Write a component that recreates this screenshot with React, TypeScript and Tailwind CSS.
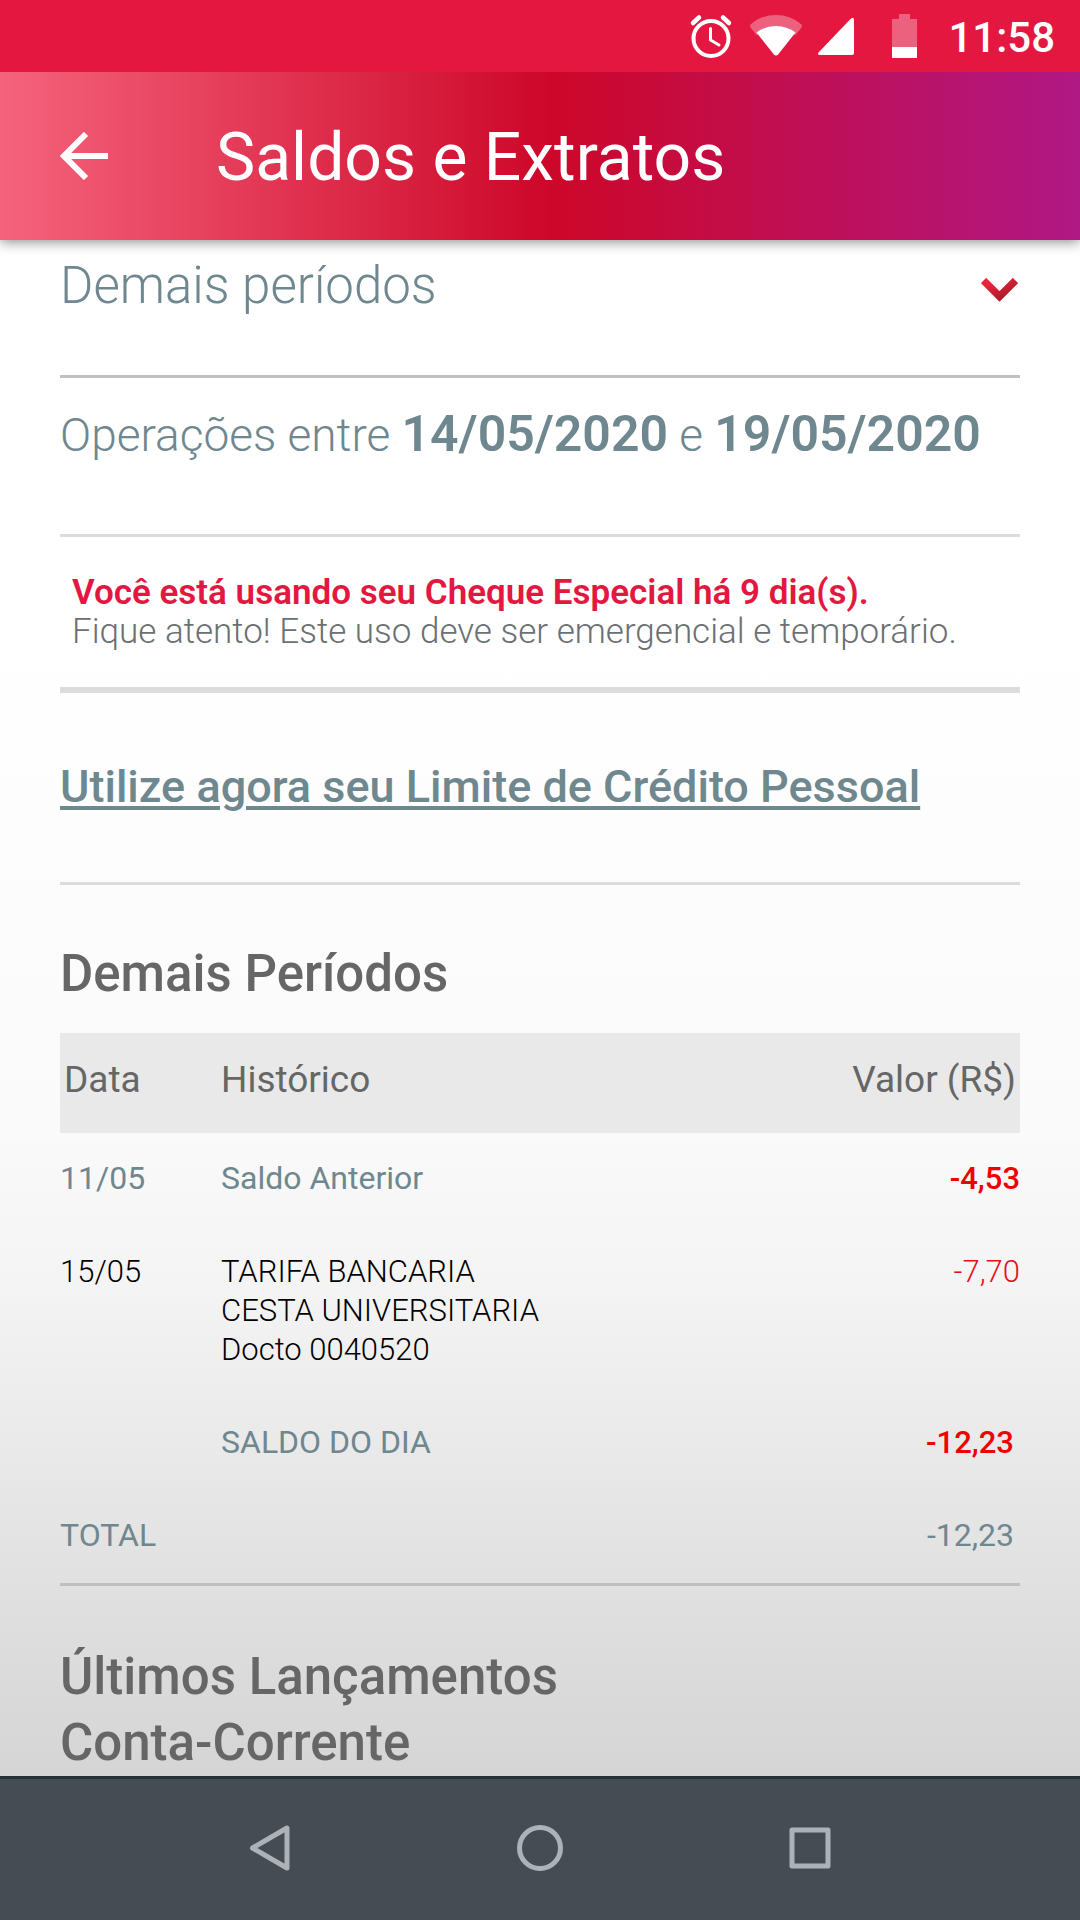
import React from "react";

function StatusBar() {
  return (
    <div className="relative z-10 flex h-[72px] items-center justify-end bg-[#e31740] pr-[25px] text-white">
      <svg className="mr-4 h-[44px] w-[44px]" viewBox="0 0 44 44" fill="none" stroke="currentColor" aria-hidden="true">
        <circle cx="22" cy="24.5" r="17.5" strokeWidth="4" />
        <path d="M21.5 14.5v11.5l8.5 5" strokeWidth="3" strokeLinecap="round" strokeLinejoin="round" />
        <path d="M4 9l6-5.500M40 9l-6-5.500" strokeWidth="4.500" strokeLinecap="round" />
      </svg>
      <svg className="mr-[14px] h-[44px] w-[54px]" viewBox="0 0 54 44" fill="currentColor" aria-hidden="true">
        <path d="M1.500 10.500Q12 1 27 1t25.500 9.500q1 1.500 0 3l-6.500 8Q38 13 27 13T8 21.500l-6.500-8q-1-1.500 0-3z" opacity=".32" />
        <path d="M7.500 18.500Q16 12 27 12t19.500 6.500L29.500 40q-2.500 3-5 0z" />
      </svg>
      <svg className="mr-[37px] h-[44px] w-[38px]" viewBox="0 0 38 44" fill="currentColor" aria-hidden="true">
        <path d="M33.500 5q3.500-3 3.500 1v33q0 2-2 2H3q-3.500 0-1-3z" />
      </svg>
      <svg className="mr-[31px] h-[44px] w-[25px]" viewBox="0 0 25 44" fill="currentColor" aria-hidden="true">
        <path d="M7 0h11v5h7v28H0V5h7z" opacity=".32" />
        <path d="M0 33h25v11H0z" />
      </svg>
      <span className="pt-1 text-[42px] leading-[48px] font-medium">11:58</span>
    </div>
  );
}

function Header() {
  return (
    <header className="relative flex h-[168px] items-center bg-[linear-gradient(90deg,#f5637c_0%,#cd0729_51%,#b01884_100%)] pl-[60px] text-white shadow-[0_2px_12px_rgba(0,0,0,0.45)]">
      <button type="button" aria-label="Voltar" className="mr-[108px] h-12 w-12">
        <svg className="h-12 w-12" viewBox="0 0 48 48" fill="none" stroke="currentColor" strokeWidth="6" aria-hidden="true">
          <path d="M48 24H4M26 2L4 24l22 22" />
        </svg>
      </button>
      <h1 className="pt-1 text-[66px] leading-[72px]">Saldos e Extratos</h1>
    </header>
  );
}

function PeriodSelect() {
  return (
    <div className="relative border-b-[3px] border-[#c0c0c0] pb-[43px]">
      <select
        aria-label="Período"
        className="block h-[92px] w-full appearance-none bg-transparent text-[51px] font-light text-[#6f878f] outline-none"
      >
        <option>Demais períodos</option>
      </select>
      <svg className="pointer-events-none absolute top-[38px] right-0.5 h-6 w-[37px]" viewBox="0 0 37 24" fill="none" aria-hidden="true">
        <defs>
          <linearGradient id="chevron" x1="0" x2="1" y1="0" y2="1">
            <stop offset="0.2" stopColor="#e8253a" />
            <stop offset="0.8" stopColor="#b01c2c" />
          </linearGradient>
        </defs>
        <path d="M2.500 2.500L18.500 18.500l16-16" stroke="url(#chevron)" strokeWidth="7.500" />
      </svg>
    </div>
  );
}

type Row = {
  date: string;
  lines: string[];
  value: string;
  tone: string;
  valueTone: string;
};

const rows: Row[] = [
  {
    date: "11/05",
    lines: ["Saldo Anterior"],
    value: "-4,53",
    tone: "text-[32px] text-[#6f878f]",
    valueTone: "font-medium text-[#f00000]",
  },
  {
    date: "15/05",
    lines: ["TARIFA BANCARIA", "CESTA UNIVERSITARIA", "Docto 0040520"],
    value: "-7,70",
    tone: "font-light text-black",
    valueTone: "font-light text-[#e60f1a]",
  },
  {
    date: "",
    lines: ["SALDO DO DIA"],
    value: "-12,23",
    tone: "text-[32px] text-[#6f878f]",
    valueTone: "pr-1.5 font-medium text-[#f00000]",
  },
];

function Statement() {
  return (
    <table className="w-full border-b-[3px] border-[#bfbfbf] text-[31px] leading-[39px]">
      <thead>
        <tr className="h-[100px] bg-[#e9e9e9] text-left text-[37px] text-[#666]">
          <th scope="col" className="w-[161px] pb-2 pl-1 font-normal">Data</th>
          <th scope="col" className="pb-2 font-normal">Histórico</th>
          <th scope="col" className="pr-1 pb-2 text-right font-normal">Valor (R$)</th>
        </tr>
      </thead>
      <tbody>
        {rows.map((row) => (
          <tr key={row.value + row.date} className="align-top">
            <td className={`pt-[26px] pb-7 leading-[39px] ${row.tone}`}>{row.date}</td>
            <td className={`pt-[26px] pb-7 leading-[39px] ${row.tone}`}>
              {row.lines.map((line) => (
                <div key={line}>{line}</div>
              ))}
            </td>
            <td className={`pt-[26px] pb-7 text-right ${row.valueTone}`}>{row.value}</td>
          </tr>
        ))}
      </tbody>
      <tfoot>
        <tr className="text-[32px] text-[#6f878f]">
          <th scope="row" colSpan={2} className="pt-[26px] pb-7 text-left font-normal">TOTAL</th>
          <td className="pt-[26px] pr-1.5 pb-7 text-right">-12,23</td>
        </tr>
      </tfoot>
    </table>
  );
}

function NavBar() {
  return (
    <nav className="flex h-36 justify-center border-t-[3px] border-[#263238] bg-[#454c53] pb-[3px] text-[#adb2b8]">
      <button type="button" aria-label="Voltar" className="flex w-1/4 items-center justify-center">
        <svg className="h-12 w-12" viewBox="0 0 48 48" fill="none" stroke="currentColor" strokeWidth="5" strokeLinejoin="round" aria-hidden="true">
          <path d="M41 4v40L6.500 24z" />
        </svg>
      </button>
      <button type="button" aria-label="Início" className="flex w-1/4 items-center justify-center">
        <svg className="h-12 w-12" viewBox="0 0 48 48" fill="none" stroke="currentColor" strokeWidth="5" aria-hidden="true">
          <circle cx="24" cy="24" r="20.500" />
        </svg>
      </button>
      <button type="button" aria-label="Recentes" className="flex w-1/4 items-center justify-center">
        <svg className="h-12 w-12" viewBox="0 0 48 48" fill="none" stroke="currentColor" strokeWidth="5" strokeLinejoin="round" aria-hidden="true">
          <path d="M6 6h36v36H6z" />
        </svg>
      </button>
    </nav>
  );
}

export default function App() {
  return (
    <div className="flex min-h-screen flex-col bg-white font-['Roboto',sans-serif]">
      <StatusBar />
      <Header />
      <main className="flex-1 bg-[linear-gradient(180deg,#fff_0%,#fff_25%,#fafafa_58%,#f4f4f4_68%,#e9e9e9_79%,#dfdfdf_89%,#d5d5d5_100%)] px-[60px]">
        <PeriodSelect />
        <p className="h-[159px] border-b-[3px] border-[#dcdcdc] pt-[26px] text-[46px] leading-[60px] font-light text-[#6f878f]">
          Operações entre <strong className="text-[50px] font-semibold">14/05/2020</strong> e{" "}
          <strong className="text-[50px] font-semibold">19/05/2020</strong>
        </p>
        <div className="border-b-[6px] border-[#dcdcdc] px-3 pt-9 pb-9 leading-[39px]">
          <p className="text-[35px] font-semibold text-[#e31740]">Você está usando seu Cheque Especial há 9 dia(s).</p>
          <p className="text-[35px] font-light text-[#6b7073]">Fique atento! Este uso deve ser emergencial e temporário.</p>
        </div>
        <div className="border-b-[3px] border-[#dcdcdc] pt-16 pb-[65px] text-[45px] leading-[60px]">
          <a href="#credito" className="font-medium text-[#6f878f] underline decoration-4 underline-offset-4">
            Utilize agora seu Limite de Crédito Pessoal
          </a>
        </div>
        <h2 className="pt-14 pb-[26px] text-[51px] leading-[66px] font-medium text-[#666]">Demais Períodos</h2>
        <Statement />
        <h2 className="pt-[58px] text-[51px] leading-[66px] font-medium text-[#666]">
          Últimos Lançamentos
          <br />
          Conta-Corrente
        </h2>
      </main>
      <NavBar />
    </div>
  );
}
